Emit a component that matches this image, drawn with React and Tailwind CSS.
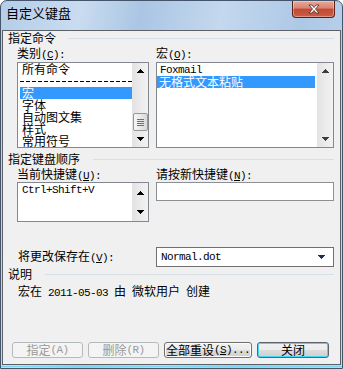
import React from "react";

function M({ children }) {
  return <span className="font-['Liberation_Mono',monospace] text-[11px] tracking-[-0.6px]">{children}</span>;
}

function U({ children }) {
  return <span className="underline underline-offset-1">{children}</span>;
}

function Tri({ up, color = "#000" }) {
  return (
    <svg width="7" height="4" viewBox="0 0 7 4" shapeRendering="crispEdges">
      <path d={up ? "M3.5 0L7 4H0Z" : "M0 0H7L3.5 4Z"} fill={color} />
    </svg>
  );
}

function ArrowBtn({ up, color, h }) {
  return (
    <div className={"flex items-center justify-center " + h}>
      <Tri up={up} color={color} />
    </div>
  );
}

function Header({ text, w }) {
  return (
    <div className="flex h-[12px] items-center pl-[5px] pr-[6px]">
      <span className={"whitespace-nowrap text-[12px] leading-[12px] " + w}>{text}</span>
      <div className="h-px flex-1 bg-[#d5dfe5]" />
    </div>
  );
}

function Btn({ children, kind }) {
  const base =
    "flex h-[16px] items-center justify-center rounded-[3px] border text-[12px] leading-[12px] whitespace-nowrap";
  if (kind === "disabled")
    return (
      <div className={base + " border-[#b5b9bc] bg-[#f4f4f4] text-[#9a9a9a]"}>{children}</div>
    );
  if (kind === "default")
    return (
      <div
        className={
          base +
          " border-[#5b6570] bg-[linear-gradient(to_bottom,#f2f2f2_0%,#ebebeb_50%,#dddddd_50%,#cfcfcf_100%)] text-black shadow-[inset_0_0_0_1px_#48d5f6]"
        }
      >
        {children}
      </div>
    );
  return (
    <div
      className={
        base +
        " border-[#707070] bg-[linear-gradient(to_bottom,#f2f2f2_0%,#ebebeb_50%,#dddddd_50%,#cfcfcf_100%)] text-black shadow-[inset_0_0_0_1px_#fcfcfc]"
      }
    >
      {children}
    </div>
  );
}

export default function App() {
  return (
    <div className="flex h-[369px] w-[343px] flex-col overflow-hidden rounded-t-[7px] border border-[#44556b] bg-[linear-gradient(100deg,#b5cde8_0%,#c9dcf0_20%,#aac6e4_35%,#c4d8ee_55%,#adc8e6_75%,#c2d7ee_100%)] font-['Noto_Sans_CJK_SC',sans-serif] text-black">
      {/* title bar */}
      <div className="flex h-[29px] shrink-0 items-start">
        <div className="pl-[5px] pt-[5px] text-[13px] leading-[13px] text-black">自定义键盘</div>
        <div className="ml-auto mr-[7px] flex h-[17px] w-[43px] items-center justify-center rounded-b-[4px] border border-t-0 border-[#5a2018] bg-[linear-gradient(to_bottom,#e8a898_0%,#d98272_45%,#c04a34_50%,#cf5c43_100%)] shadow-[inset_0_0_0_1px_rgba(255,255,255,0.35)]">
          <svg width="12" height="10" viewBox="0 0 12 10">
            <path
              d="M1 1H4L6 3.5L8 1H11L7.5 5L11 9H8L6 6.5L4 9H1L4.5 5Z"
              fill="#fff"
              stroke="#4a2a25"
              strokeWidth="0.8"
              strokeLinejoin="round"
            />
          </svg>
        </div>
      </div>

      {/* content */}
      <div className="ml-px flex h-[335px] w-[339px] shrink-0 flex-col border border-[#5c6168] bg-[#f0f0f0]">
        <div className="mt-[1px]">
          <Header text="指定命令" w="w-[60px]" />
        </div>

        {/* labels 1 */}
        <div className="mt-[3px] flex h-[12px] pl-[14px] text-[12px] leading-[12px]">
          <div className="w-[132px]">
            类别<M>(<U>C</U>):</M>
          </div>
          <div className="ml-[7px]">
            宏<M>(<U>O</U>):</M>
          </div>
        </div>

        {/* lists */}
        <div className="mt-[3px] flex h-[86px] pl-[14px]">
          <div className="flex h-[86px] w-[132px] border border-[#828790] bg-white">
            <div className="flex-1 overflow-hidden text-[12px] leading-[12px]">
              <div className="ml-[2px] h-[12px] whitespace-nowrap pl-[2px]">所有命令</div>
              <div className="ml-[2px] flex h-[12px] items-center">
                <div className="h-px w-full bg-[repeating-linear-gradient(to_right,#000_0px,#000_4px,transparent_4px,transparent_6px)]" />
              </div>
              <div className="ml-[2px] h-[12px] whitespace-nowrap bg-[#3399ff] pl-[2px] text-white">宏</div>
              <div className="ml-[2px] h-[12px] whitespace-nowrap pl-[2px]">字体</div>
              <div className="ml-[2px] h-[12px] whitespace-nowrap pl-[2px]">自动图文集</div>
              <div className="ml-[2px] h-[12px] whitespace-nowrap pl-[2px]">样式</div>
              <div className="ml-[2px] h-[12px] whitespace-nowrap pl-[2px]">常用符号</div>
            </div>
            <div className="flex w-[16px] flex-col bg-[linear-gradient(to_right,#e3e3e3,#f2f2f2)]">
              <ArrowBtn up h="h-[16px]" />
              <div className="flex flex-1 flex-col justify-end">
                <div className="ml-px flex h-[18px] w-[15px] flex-col items-center justify-center gap-[1px] rounded-[2px] border border-[#979797] bg-[linear-gradient(to_right,#f7f7f7,#d9d9d9)]">
                  <div className="h-px w-[7px] bg-[#707070]" />
                  <div className="h-px w-[7px] bg-[#707070]" />
                  <div className="h-px w-[7px] bg-[#707070]" />
                  <div className="h-px w-[7px] bg-[#707070]" />
                </div>
              </div>
              <ArrowBtn h="h-[16px]" />
            </div>
          </div>

          <div className="ml-[7px] flex h-[86px] w-[178px] border border-[#828790] bg-white">
            <div className="flex-1 overflow-hidden pt-[1px] text-[12px] leading-[12px]">
              <div className="flex h-[12px] items-center whitespace-nowrap pl-[3px]">
                <M>Foxmail</M>
              </div>
              <div className="mr-[2px] h-[12px] whitespace-nowrap bg-[#3399ff] pl-[2px] text-white">
                无格式文本粘贴
              </div>
            </div>
            <div className="flex w-[16px] flex-col bg-[linear-gradient(to_right,#e3e3e3,#f2f2f2)]">
              <ArrowBtn up color="#3c3c3c" h="h-[16px]" />
              <div className="flex-1" />
              <ArrowBtn color="#3c3c3c" h="h-[16px]" />
            </div>
          </div>
        </div>

        <div className="mt-[5px]">
          <Header text="指定键盘顺序" w="w-[85px]" />
        </div>

        {/* labels 2 */}
        <div className="mt-[3px] flex h-[12px] pl-[14px] text-[12px] leading-[12px]">
          <div className="w-[132px] whitespace-nowrap">
            当前快捷键<M>(<U>U</U>):</M>
          </div>
          <div className="ml-[7px] whitespace-nowrap">
            请按新快捷键<M>(<U>N</U>):</M>
          </div>
        </div>

        {/* boxes 2 */}
        <div className="mt-[2px] flex items-start pl-[14px]">
          <div className="flex h-[40px] w-[132px] border border-[#828790] bg-white">
            <div className="flex-1 pl-[4px] pt-[1px]">
              <div className="flex h-[12px] items-center whitespace-nowrap">
                <M>Ctrl+Shift+V</M>
              </div>
            </div>
            <div className="flex w-[16px] flex-col bg-[linear-gradient(to_right,#e3e3e3,#f2f2f2)]">
              <ArrowBtn up h="h-[19px]" />
              <ArrowBtn h="h-[19px]" />
            </div>
          </div>
          <div className="ml-[7px] h-[19px] w-[178px] border border-[#8c8f94] bg-white" />
        </div>

        {/* save row */}
        <div className="mt-[25px] flex h-[20px] items-center pl-[14px]">
          <div className="w-[132px] whitespace-nowrap pl-[1px] text-[12px] leading-[12px]">
            将更改保存在<M>(<U>V</U>):</M>
          </div>
          <div className="ml-[7px] flex h-[20px] w-[178px] items-center border border-[#707070] bg-white pl-[4px] pr-[8px]">
            <M>Normal.dot</M>
            <div className="ml-auto flex items-center">
              <Tri color="#1c2e52" />
            </div>
          </div>
        </div>

        <div className="mt-[1px]">
          <Header text="说明" w="w-[37px]" />
        </div>

        <div className="mt-[5px] h-[12px] whitespace-pre pl-[15px] text-[12px] leading-[12px]">
          宏在<M> 2011-05-03 </M>由<M> </M>微软用户<M> </M>创建
        </div>

        {/* buttons */}
        <div className="mt-[45px] flex gap-[5px] pl-[9px]">
          <div className="w-[71px]">
            <Btn kind="disabled">
              指定<M>(A)</M>
            </Btn>
          </div>
          <div className="w-[71px]">
            <Btn kind="disabled">
              删除<M>(R)</M>
            </Btn>
          </div>
          <div className="w-[88px]">
            <Btn>
              全部重设<M>(<U>S</U>)...</M>
            </Btn>
          </div>
          <div className="w-[72px]">
            <Btn kind="default">关闭</Btn>
          </div>
        </div>
      </div>
      <div className="mt-[1px] h-px w-full bg-[#7fd6f2]" />
    </div>
  );
}
